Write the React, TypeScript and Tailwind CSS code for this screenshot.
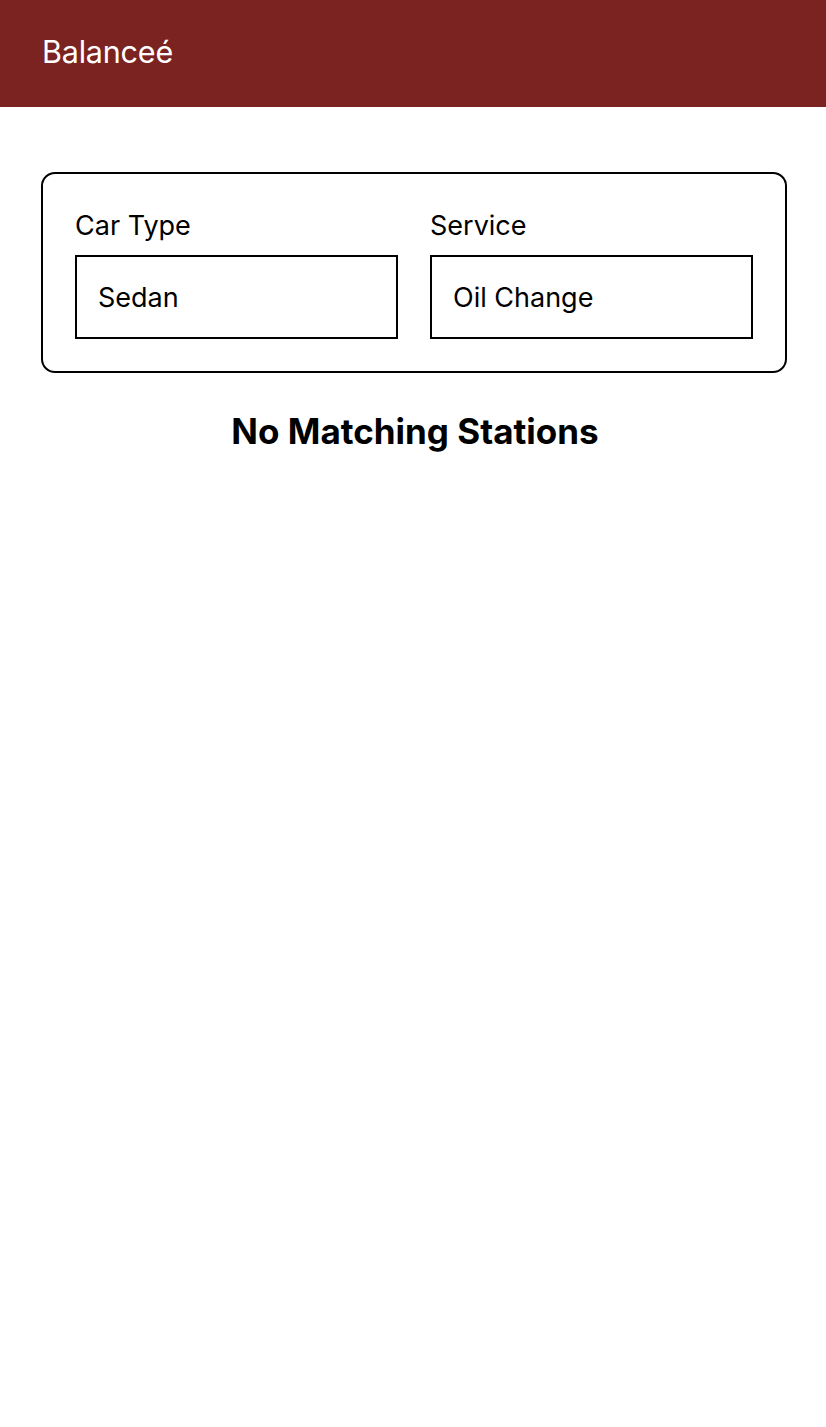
import React, { useState } from "react";

export default function App() {
    const [carType, setCarType] = useState("Sedan");
    const [service, setService] = useState("Oil Change");

    return (
        <div className="min-h-screen bg-white text-black" style={{ fontFamily: "Inter, 'Noto Sans', sans-serif" }}>
            {/* Header */}
            <header className="h-[107px] bg-[#7a2321] flex items-center px-[42px] pb-[4px]">
                <h1 className="text-[30.5px] text-white font-normal tracking-[-0.2px]">Balanceé</h1>
            </header>

            <main className="pl-[41px] pr-[39px] pt-[65px]">
                {/* Filters */}
                <div className="border-2 border-black rounded-[14px] p-[32px] grid grid-cols-2 gap-[32px]">
                    <div className="flex flex-col">
                        <label className="text-[27px] leading-[34px] mt-[3px] mb-[12px]">Car Type</label>
                        <input
                            className="h-[84px] border-2 border-black px-[21px] text-[27px] outline-none"
                            value={carType}
                            onChange={e => setCarType(e.target.value)}
                        />
                    </div>
                    <div className="flex flex-col">
                        <label className="text-[27px] leading-[34px] mt-[3px] mb-[12px]">Service</label>
                        <input
                            className="h-[84px] border-2 border-black px-[21px] text-[27px] outline-none"
                            value={service}
                            onChange={e => setService(e.target.value)}
                        />
                    </div>
                </div>

                {/* Results */}
                <h2 className="mt-[37px] text-center text-[35px] font-bold leading-[42px] pl-[2px]">No Matching Stations</h2>
            </main>
        </div>
    );
}
